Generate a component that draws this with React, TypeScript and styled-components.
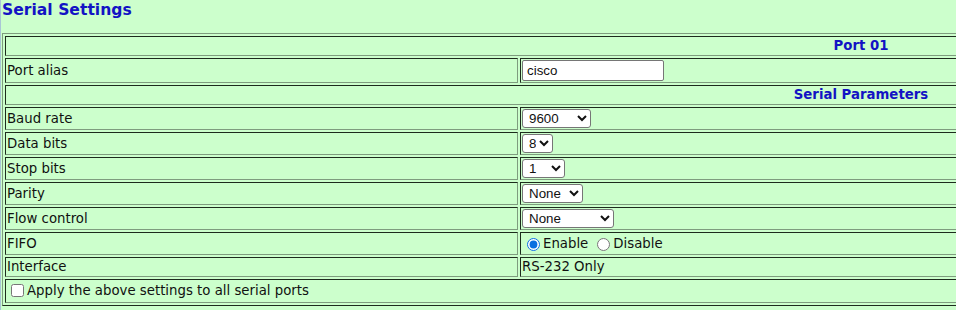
import React, { useState } from "react";
import styled, { createGlobalStyle } from "styled-components";

const GlobalStyle = createGlobalStyle`
  html, body {
    margin: 0;
    overflow: hidden;
    background: #ccffcc;
  }
  body {
    border-left: 1px solid #a9c6d6;
    padding-left: 1px;
    min-height: 310px;
    box-sizing: border-box;
    font-family: "DejaVu Sans", Verdana, sans-serif;
    font-size: 13.3px;
    color: #111;
  }
`;

type Option = { value: string; width: number; options: string[] };

const selects: { label: string; field: string; opt: Option }[] = [
  { label: "Baud rate", field: "baud", opt: { value: "9600", width: 69, options: ["1200", "2400", "4800", "9600", "19200", "38400", "57600", "115200"] } },
  { label: "Data bits", field: "data", opt: { value: "8", width: 31, options: ["5", "6", "7", "8"] } },
  { label: "Stop bits", field: "stop", opt: { value: "1", width: 43, options: ["1", "1.5", "2"] } },
  { label: "Parity", field: "parity", opt: { value: "None", width: 61, options: ["None", "Odd", "Even", "Mark", "Space"] } },
  { label: "Flow control", field: "flow", opt: { value: "None", width: 92, options: ["None", "RTS/CTS", "XON/XOFF"] } },
];

export default function App() {
  const [alias, setAlias] = useState("cisco");
  const [values, setValues] = useState<Record<string, string>>(
    Object.fromEntries(selects.map((s) => [s.field, s.opt.value]))
  );
  const [fifo, setFifo] = useState("enable");
  const [applyAll, setApplyAll] = useState(false);

  return (
    <>
      <GlobalStyle />
      <Title>Serial Settings</Title>
      <Table>
        <colgroup>
          <col style={{ width: "30%" }} />
          <col style={{ width: "70%" }} />
        </colgroup>
        <tbody>
          <tr>
            <HeadCell colSpan={2}>Port 01</HeadCell>
          </tr>
          <tr>
            <Cell>Port alias</Cell>
            <Cell>
              <TextInput
                type="text"
                value={alias}
                onChange={(e) => setAlias(e.target.value)}
              />
            </Cell>
          </tr>
          <tr>
            <HeadCell colSpan={2}>Serial Parameters</HeadCell>
          </tr>
          {selects.map((s) => (
            <tr key={s.field}>
              <Cell>{s.label}</Cell>
              <Cell>
                <Select
                  $width={s.opt.width}
                  value={values[s.field]}
                  onChange={(e) =>
                    setValues({ ...values, [s.field]: e.target.value })
                  }
                >
                  {s.opt.options.map((o) => (
                    <option key={o} value={o}>
                      {o}
                    </option>
                  ))}
                </Select>
              </Cell>
            </tr>
          ))}
          <tr>
            <Cell>FIFO</Cell>
            <Cell>
              <Choices>
                <Choice>
                  <Radio
                    type="radio"
                    name="fifo"
                    checked={fifo === "enable"}
                    onChange={() => setFifo("enable")}
                  />
                  Enable
                </Choice>
                <Choice>
                  <Radio
                    type="radio"
                    name="fifo"
                    checked={fifo === "disable"}
                    onChange={() => setFifo("disable")}
                  />
                  Disable
                </Choice>
              </Choices>
            </Cell>
          </tr>
          <tr>
            <Cell>Interface</Cell>
            <Cell>RS-232 Only</Cell>
          </tr>
          <tr>
            <Cell colSpan={2}>
              <Choice>
                <Check
                  type="checkbox"
                  checked={applyAll}
                  onChange={(e) => setApplyAll(e.target.checked)}
                />
                Apply the above settings to all serial ports
              </Choice>
            </Cell>
          </tr>
        </tbody>
      </Table>
    </>
  );
}

const Title = styled.div`
  font-size: 15.6px;
  font-weight: bold;
  color: #1313c4;
  line-height: 18px;
  padding-top: 1px;
  margin-bottom: 14px;
`;

const Table = styled.table`
  width: 1718px;
  table-layout: fixed;
  border-collapse: separate;
  border-spacing: 2px;
  border: 1px solid;
  border-color: #7e9c7e #1d2b1d #1d2b1d #7e9c7e;
`;

const Cell = styled.td`
  padding: 1px;
  line-height: 16px;
  vertical-align: middle;
  white-space: nowrap;
  border: 1px solid;
  border-color: #1d2b1d #7e9c7e #7e9c7e #1d2b1d;
`;

const HeadCell = styled(Cell)`
  text-align: center;
  font-weight: bold;
  color: #1313c4;
`;

const TextInput = styled.input`
  display: block;
  box-sizing: border-box;
  width: 142px;
  height: 21px;
  margin: 0;
  padding: 1px 4px;
  font-family: "Liberation Sans", Arial, sans-serif;
  font-size: 13.33px;
  color: #111;
  background: #fff;
  border: 1px solid #767676;
  border-radius: 2px;
`;

const Select = styled.select<{ $width: number }>`
  display: block;
  box-sizing: border-box;
  width: ${(p) => p.$width}px;
  height: 19px;
  margin: 0;
  padding: 0 0 0 2px;
  font-family: "Liberation Sans", Arial, sans-serif;
  font-size: 13.33px;
  color: #111;
  background: #fff;
  border: 1px solid #767676;
  border-radius: 3px;
`;

const Choices = styled.div`
  display: flex;
  align-items: center;
  gap: 4px;
  height: 19px;
`;

const Choice = styled.label`
  display: inline-flex;
  align-items: center;
  height: 19px;
`;

const Radio = styled.input`
  width: 13px;
  height: 13px;
  margin: 1px 3px 0 5px;
  accent-color: #0b6fe0;
`;

const Check = styled.input`
  width: 13px;
  height: 13px;
  margin: 0 3px 0 4px;
`;
